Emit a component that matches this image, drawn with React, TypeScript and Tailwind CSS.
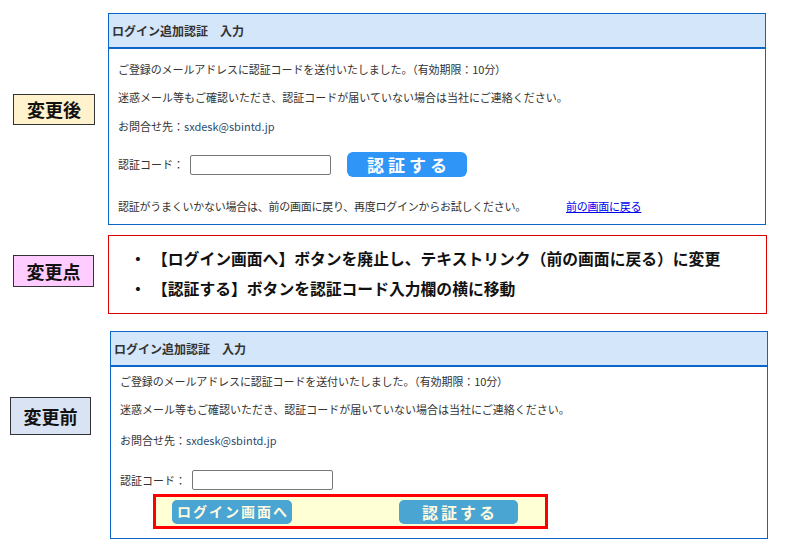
const font = { fontFamily: '"Noto Sans CJK JP", "Noto Sans", sans-serif' }

function Label({ text, className }: { text: string; className: string }) {
  return (
    <div
      className={`flex items-center justify-center border border-[#333] text-[18px] font-bold text-[#111] ${className}`}
    >
      {text}
    </div>
  )
}

function PanelHeader() {
  return (
    <div className="flex h-[35px] items-center border-b-2 border-[#0a66c8] bg-[#d3e6fa] pl-[3px] text-[12px] font-bold text-[#333]">
      ログイン追加認証　入力
    </div>
  )
}

function Intro({ gap3 }: { gap3: string }) {
  return (
    <>
      <p className="text-[11px] leading-[14px] tracking-[-0.1px]">
        ご登録のメールアドレスに認証コードを送付いたしました。（有効期限：10分）
      </p>
      <p className="mt-[14px] text-[11px] leading-[14px]">
        迷惑メール等もご確認いただき、認証コードが届いていない場合は当社にご連絡ください。
      </p>
      <p className={`${gap3} text-[11px] leading-[14px]`}>
        お問合せ先：<span className="text-[#2b4d6e]">sxdesk@sbintd.jp</span>
      </p>
    </>
  )
}

export default function App() {
  return (
    <div className="h-[549px] w-[789px] bg-white text-[#333]" style={font}>
      {/* 変更後 */}
      <div className="flex pt-[13px]">
        <Label text="変更後" className="ml-[13px] mt-[81px] h-[31px] w-[82px] bg-[#fff2cc]" />
        <div className="ml-[13px] h-[212px] w-[658px] border border-[#0a66c8]">
          <PanelHeader />
          <div className="pl-[9px] pt-[13px]">
            <Intro gap3="mt-[15px]" />
            <div className="mt-[19px] flex h-[25px] items-center">
              <span className="w-[72px] text-[11px]">認証コード：</span>
              <div className="h-[20px] w-[141px] rounded-[2px] border border-[#777]" />
              <button className="ml-[16px] flex h-[25px] w-[120px] items-center justify-center rounded-[6px] bg-[#2f95f7] pl-[4px] text-[17px] font-bold tracking-[4px] text-white">
                認証する
              </button>
            </div>
            <p className="mt-[22px] text-[11px] leading-[14px] tracking-[-0.25px]">
              認証がうまくいかない場合は、前の画面に戻り、再度ログインからお試しください。
              <a href="#" className="ml-[40px] text-[#0000ee] underline">
                前の画面に戻る
              </a>
            </p>
          </div>
        </div>
      </div>

      {/* 変更点 */}
      <div className="mt-[10px] flex">
        <Label text="変更点" className="ml-[13px] mt-[20px] h-[32px] w-[81px] bg-[#ffccff]" />
        <div className="ml-[14px] h-[79px] w-[659px] border border-[#e00000] pt-[13px] text-[15.8px] font-bold leading-[20px] text-[#111]">
          <div className="flex">
            <span className="ml-[21px] w-[25px]">・</span>
            <span className="-ml-[3px]">【ログイン画面へ】ボタンを廃止し、テキストリンク（前の画面に戻る）に変更</span>
          </div>
          <div className="mt-[10px] flex">
            <span className="ml-[21px] w-[25px]">・</span>
            <span className="-ml-[3px]">【認証する】ボタンを認証コード入力欄の横に移動</span>
          </div>
        </div>
      </div>

      {/* 変更前 */}
      <div className="mt-[17px] flex">
        <Label text="変更前" className="ml-[10px] mt-[66px] h-[38px] w-[81px] bg-[#dae3f3]" />
        <div className="ml-[19px] h-[208px] w-[658px] border border-[#0a66c8]">
          <PanelHeader />
          <div className="pl-[9px] pt-[7px]">
            <Intro gap3="mt-[17px]" />
            <div className="mt-[23px] flex h-[20px] items-center">
              <span className="w-[72px] text-[11px]">認証コード：</span>
              <div className="h-[20px] w-[141px] rounded-[2px] border border-[#777]" />
            </div>
          </div>
          <div className="ml-[42px] mt-[4px] flex h-[35px] w-[395px] items-center border-[3px] border-[#ff0000] bg-[#ffffd6] pl-[16px]">
            <button className="flex h-[24px] w-[120px] items-center justify-center rounded-[5px] bg-[#4aa5d2] pl-[2px] text-[14px] font-bold tracking-[2px] text-[#fffbe0]">
              ログイン画面へ
            </button>
            <button className="ml-[107px] flex h-[24px] w-[119px] items-center justify-center rounded-[5px] bg-[#4aa5d2] pl-[3px] text-[16px] font-bold tracking-[3px] text-[#fffbe0]">
              認証する
            </button>
          </div>
        </div>
      </div>
    </div>
  )
}
